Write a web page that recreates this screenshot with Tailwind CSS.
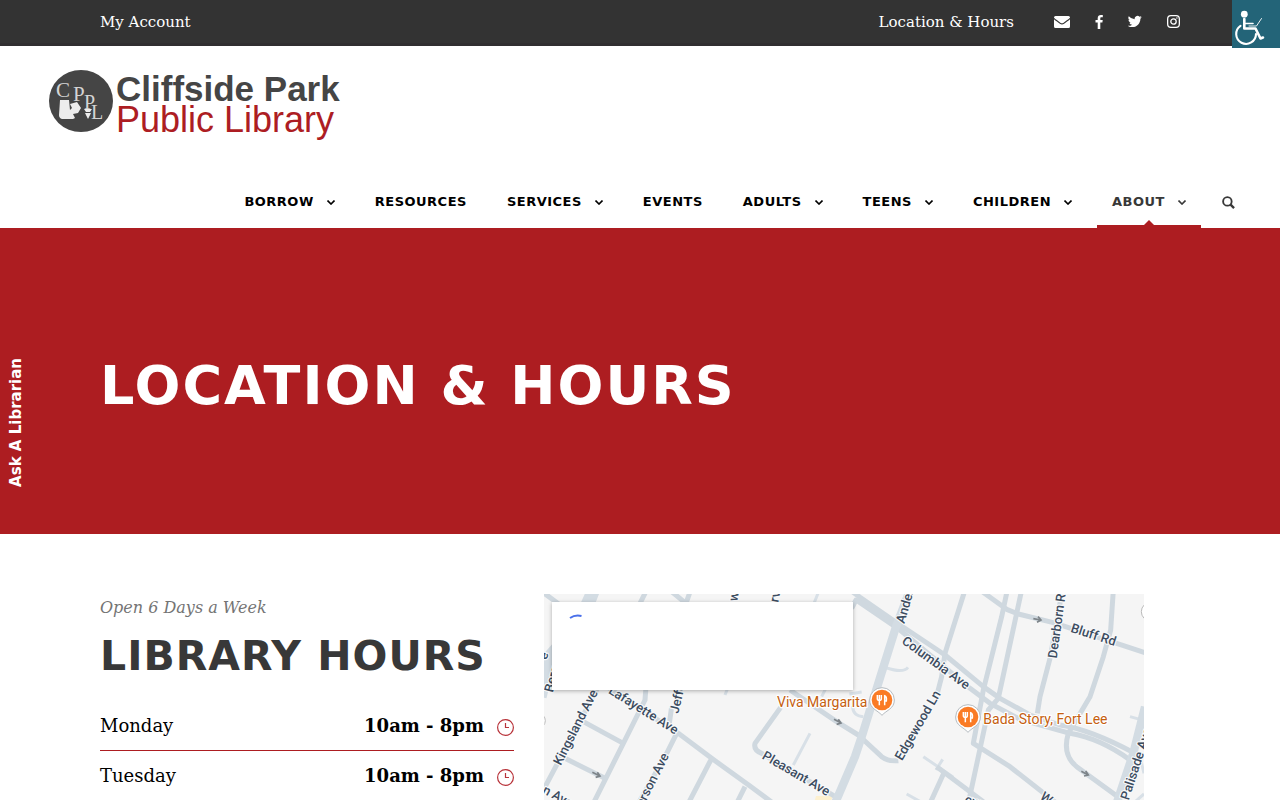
<!DOCTYPE html>
<html lang="en">
<head>
    <meta charset="UTF-8">
    <meta name="viewport" content="width=device-width, initial-scale=1.0">
    <title>Location &amp; Hours - Cliffside Park Public Library</title>
    <script src="https://cdn.jsdelivr.net/npm/@tailwindcss/browser@4"></script>
</head>
<body class="bg-white font-['DejaVu_Serif',serif] text-black">
    <!-- Top bar -->
    <div class="bg-[#333333] h-[46px] border-b-3 border-[#302e30] px-[100px] flex items-center justify-between text-[15px] leading-6 text-white">
        <a href="#">My Account</a>
        <div class="flex items-center gap-10">
            <a href="#">Location &amp; Hours</a>
            <div class="flex items-center gap-[25px]">
                <a href="#" aria-label="Email">
                    <svg class="w-4 h-3" viewBox="0 0 16 12" fill="#fff"><path d="M1.500 0h13A1.500 1.500 0 0 1 16 1.500v.3C14.800 3.200 11 5.600 9.300 6.900c-.9.600-1.700.6-2.600 0C5 5.600 1.200 3.200 0 1.800v-.3A1.500 1.500 0 0 1 1.500 0zM0 3.300c1.500 1.500 4.300 3.300 5.900 4.500 1.400 1 2.800 1 4.200 0 1.600-1.200 4.400-3 5.900-4.500v7.200a1.500 1.500 0 0 1-1.500 1.500h-13A1.500 1.500 0 0 1 0 10.500z"/></svg>
                </a>
                <a href="#" aria-label="Facebook">
                    <svg class="w-2 h-[14px]" viewBox="0 0 8 14" fill="#fff"><path d="M7.800.1v2.200H6.500c-1 0-1.200.5-1.200 1.200v1.500h2.400L7.400 7.500H5.300V14H2.700V7.500H.5V5h2.200V3.200C2.700 1.100 4 0 5.900 0c.9 0 1.700.1 1.900.1z"/></svg>
                </a>
                <a href="#" aria-label="Twitter">
                    <svg class="w-[14px] h-[13px]" viewBox="0 0 24 22" fill="#fff"><path d="M23.600 3.600a10 10 0 0 1-2.400 2.500v.6c0 6.500-4.900 13.900-13.900 13.900-2.800 0-5.400-.8-7.500-2.200 2.600.3 5.200-.5 7.200-2-2.200 0-4-1.500-4.600-3.400.7.1 1.500.1 2.200-.1a4.900 4.900 0 0 1-3.900-4.900c.6.400 1.400.6 2.200.6A4.900 4.900 0 0 1 1.400 2.100a13.900 13.900 0 0 0 10.100 5.100 4.900 4.900 0 0 1 8.300-4.500 9 9 0 0 0 3.100-1.200 4.900 4.900 0 0 1-2.100 2.700 10 10 0 0 0 2.800-.6z"/></svg>
                </a>
                <a href="#" aria-label="Instagram">
                    <svg class="w-[13px] h-[13px]" viewBox="0 0 14 14" fill="none" stroke="#fff"><rect x=".7" y=".7" width="12.600" height="12.600" rx="3.500" stroke-width="1.400"/><circle cx="7" cy="7" r="2.900" stroke-width="1.400"/><circle cx="10.700" cy="3.300" r=".8" fill="#fff" stroke="none"/></svg>
                </a>
            </div>
        </div>
    </div>

    <!-- Accessibility toggle -->
    <button aria-label="Accessibility options" class="absolute top-0 right-0 w-12 h-12 bg-[#236478]">
        <svg class="w-12 h-12" viewBox="0 0 48 48" fill="none" stroke="#fff" stroke-linecap="round" stroke-linejoin="round">
            <circle cx="12.300" cy="14.200" r="3.400" fill="#fff" stroke="none"/>
            <path d="M12.300 19v9.500H23.500L28.500 38.500L31 37.500" stroke-width="2.600"/>
            <path d="M13 23.500h8" stroke-width="1.600"/>
            <path d="M17 26h7.500L29.500 18.500" stroke-width=".9"/>
            <path d="M8.500 25.800A9.900 9.900 0 1 0 24 34" stroke-width="2.100"/>
        </svg>
    </button>

    <header class="pt-6">
        <a href="#" class="flex w-fit ml-[49px] gap-[3px]" aria-label="Cliffside Park Public Library">
            <svg class="w-16 h-[62px]" viewBox="0 0 64 62">
                <ellipse cx="32" cy="31" rx="32" ry="31" fill="#454545"/>
                <g fill="#d4d4d4" font-family="Liberation Serif, serif">
                    <text x="7" y="27" font-size="21">C</text>
                    <text x="24" y="31" font-size="21">P</text>
                    <text x="35" y="39" font-size="20">P</text>
                    <text x="42" y="49" font-size="20">L</text>
                </g>
                <path d="M11 30h9l1 10 2-2-2-4 7-2 4 6-3 5-5 1 2 4-2 1H13q-3-1-3-4z" fill="#ededed"/>
                <path d="M35 39h8l-2 3h-4zM36 43h6l-3 6z" fill="#ededed"/>
            </svg>
            <span class="flex flex-col font-['Liberation_Sans',sans-serif] leading-[31px] pt-[3px]">
                <span class="text-[35px] font-bold text-[#454545]">Cliffside Park</span>
                <span class="text-[36px] text-[#ad1d23]">Public Library</span>
            </span>
        </a>

        <nav class="mt-[41px] h-[52px] pr-[45px] flex justify-end gap-10 text-[13px] leading-[52px] font-bold tracking-[0.5px] font-['DejaVu_Sans',sans-serif]">
            <a href="#" class="flex items-center gap-[13px]">BORROW
                <svg class="w-2 h-[5px]" viewBox="0 0 8 5" fill="none" stroke="currentColor" stroke-width="1.600"><path d="M.5.5L4 4L7.500.5"/></svg>
            </a>
            <a href="#">RESOURCES</a>
            <a href="#" class="flex items-center gap-[13px]">SERVICES
                <svg class="w-2 h-[5px]" viewBox="0 0 8 5" fill="none" stroke="currentColor" stroke-width="1.600"><path d="M.5.5L4 4L7.500.5"/></svg>
            </a>
            <a href="#">EVENTS</a>
            <a href="#" class="flex items-center gap-[13px]">ADULTS
                <svg class="w-2 h-[5px]" viewBox="0 0 8 5" fill="none" stroke="currentColor" stroke-width="1.600"><path d="M.5.5L4 4L7.500.5"/></svg>
            </a>
            <a href="#" class="flex items-center gap-[13px]">TEENS
                <svg class="w-2 h-[5px]" viewBox="0 0 8 5" fill="none" stroke="currentColor" stroke-width="1.600"><path d="M.5.5L4 4L7.500.5"/></svg>
            </a>
            <a href="#" class="flex items-center gap-[13px]">CHILDREN
                <svg class="w-2 h-[5px]" viewBox="0 0 8 5" fill="none" stroke="currentColor" stroke-width="1.600"><path d="M.5.5L4 4L7.500.5"/></svg>
            </a>
            <a href="#" class="relative flex items-center gap-[13px] text-[#383838]">ABOUT
                <svg class="w-2 h-[5px]" viewBox="0 0 8 5" fill="none" stroke="currentColor" stroke-width="1.600"><path d="M.5.5L4 4L7.500.5"/></svg>
                <!-- Current page marker -->
                <span class="absolute bottom-0 -left-[15px] -right-[15px] h-[3px] bg-[#ad1d21]"></span>
                <svg class="absolute bottom-[3px] left-1/2 w-[10px] h-[5px] -translate-x-1/2" viewBox="0 0 10 5"><path d="M0 5L5 0L10 5z" fill="#ad1d21"/></svg>
            </a>
            <button aria-label="Search" class="-ml-1 text-[#383838]">
                <svg class="w-[13px] h-[13px]" viewBox="0 0 14 14" fill="none" stroke="currentColor" stroke-width="2"><circle cx="5.800" cy="5.800" r="4.600"/><path d="M9 9l4 4" stroke-width="2.500"/></svg>
            </button>
        </nav>
    </header>

    <!-- Page title -->
    <section class="bg-[#ad1d21] h-[306px] px-[100px] flex items-center">
        <h1 class="pt-2.5 text-[54px] leading-[64px] font-bold tracking-[2px] text-white font-['DejaVu_Sans',sans-serif]">LOCATION &amp; HOURS</h1>
    </section>

    <button class="fixed left-0 top-[350px] w-8 h-[145px] bg-[#ad1d21] flex items-center justify-center">
        <span class="[writing-mode:vertical-rl] rotate-180 text-[15px] leading-5 font-bold text-white font-['DejaVu_Sans',sans-serif]">Ask A Librarian</span>
    </button>

    <main class="pl-[100px] pr-[136px] pt-[60px] flex gap-[30px] overflow-hidden">
        <section class="flex-1">
            <p class="italic text-base leading-[27px] text-[#747474]">Open 6 Days a Week</p>
            <h2 class="mt-2 text-[41px] leading-[54px] font-bold tracking-[1px] whitespace-nowrap text-[#383838] font-['DejaVu_Sans',sans-serif]">LIBRARY HOURS</h2>
            <ul class="mt-[18px] text-lg leading-[49px]">
                <li class="flex items-center border-b border-b-[#ad1d21]">
                    <span class="flex-1">Monday</span>
                    <span class="font-bold">10am - 8pm</span>
                    <svg class="ml-[13px] mt-1 w-[17px] h-[17px]" viewBox="0 0 17 17" fill="none" stroke="#b8333a"><circle cx="8.500" cy="8.500" r="7.900" stroke-width="1.200"/><path d="M8.500 4v4.500H12" stroke-width="1.200"/></svg>
                </li>
                <li class="flex items-center">
                    <span class="flex-1">Tuesday</span>
                    <span class="font-bold">10am - 8pm</span>
                    <svg class="ml-[13px] mt-1 w-[17px] h-[17px]" viewBox="0 0 17 17" fill="none" stroke="#b8333a"><circle cx="8.500" cy="8.500" r="7.900" stroke-width="1.200"/><path d="M8.500 4v4.500H12" stroke-width="1.200"/></svg>
                </li>
            </ul>
        </section>

        <!-- Map -->
        <div class="relative w-[600px] h-[206px]">
            <svg class="w-full h-full bg-[#f5f5f5]" viewBox="12 12 1800 618" preserveAspectRatio="xMinYMin slice" fill="none">
                <path d="M828 618h50l-6 20h-50z" fill="#fdf0cf"/>
                <!-- Side streets -->
                <g stroke="#d8e0e7" stroke-width="9" stroke-linejoin="round">
                    <path d="M565 290L555 315M838 0L820 45M1040 234Q1090 250 1104 232M810 430L760 525M845 320L860 290M928 312L965 306M938 348Q938 378 970 380M1150 500L1240 562M1208 508L1188 540M1100 612L1150 640M1770 380L1800 388M1780 640L1812 612M1800 500L1812 550"/>
                </g>
                <!-- Streets -->
                <g stroke="#cfd8df" stroke-width="15" stroke-linejoin="round">
                    <path d="M0 0L60 45M320 0L300 40M395 5L438 40L452 0M175 290L10 600"/>
                    <path d="M318 290L315 330L250 460L160 640M130 395L250 460M75 505L195 565"/>
                    <path d="M200 290L415 430L515 505L630 588L700 640M395 350L388 400M410 430L380 490L295 640M515 505L445 640M615 590L590 640"/>
                    <path d="M750 300L890 395L955 435L1025 500Q1045 515 1075 512M1192 310L1205 260L1215 190L1275 0"/>
                    <path d="M722 352L645 460Q640 480 665 490L890 622"/>
                    <path d="M930 0L960 22L1080 105L1215 195L1330 290L1380 325L1470 375L1560 405Q1650 418 1785 490"/>
                    <path d="M935 55L948 30L1080 120L1290 295L1350 340L1440 388L1590 430Q1680 445 1770 510"/>
                    <path d="M1320 0L1400 58L1435 72L1540 98L1730 160L1820 190"/>
                    <path d="M1402 0L1385 80L1330 300L1300 460L1410 530L1550 640M1445 0L1375 325L1345 360L1285 640"/>
                    <path d="M1565 12L1530 205L1500 320L1492 370M1720 0L1712 120L1690 200L1650 320L1585 430C1570 480 1585 510 1610 530L1740 625"/>
                    <path d="M1190 530L1330 635M1212 548L1170 640"/>
                </g>
                <!-- Main roads -->
                <g stroke="#d3dce3" stroke-width="25" stroke-linejoin="round">
                    <path d="M160 0Q130 90 30 200L0 320" stroke-width="40"/>
                    <path d="M1110 0L1068 110L1018 270L965 440L945 500L885 640M1815 350L1780 490L1730 640"/>
                </g>
                <g stroke="#7d8489" stroke-width="5">
                    <path d="M157 547L178 557M172 547L180 558L167 562M882 388L902 398M895 388L903 399L890 403M1480 86L1502 90M1494 80L1503 90L1491 97M1624 544L1643 554M1637 543L1645 555L1632 558"/>
                </g>
                <g fill="#fff" stroke="#bbb" stroke-width="3"><circle cx="1832" cy="65" r="28"/><circle cx="-6" cy="392" r="22"/></g>
                <!-- Street names -->
                <g fill="#3c4c60" stroke="#f8f9fa" stroke-width="7" stroke-linejoin="round" paint-order="stroke" font-family="Roboto, sans-serif" font-size="39" font-weight="500">
                    <text transform="translate(62 528) rotate(-63)">Kingsland Ave</text>
                    <text transform="translate(203 308) rotate(32)">Lafayette Ave</text>
                    <text transform="translate(415 372) rotate(-77)">Jefferson</text>
                    <text transform="translate(309 652) rotate(-63)">erson Ave</text>
                    <text transform="translate(38 309) rotate(-75)">Bergen</text>
                    <text transform="translate(20 211) rotate(-75)">e</text>
                    <text transform="translate(5 608) rotate(28)">n Ave</text>
                    <text transform="translate(592 35) rotate(-80)">w</text>
                    <text transform="translate(715 38) rotate(-80)">rv</text>
                    <text transform="translate(664 505) rotate(30)">Pleasant Ave</text>
                    <text transform="translate(1093 102) rotate(-74)">Anderson</text>
                    <text transform="translate(1083 158) rotate(36)">Columbia Ave</text>
                    <text transform="translate(1086 514) rotate(-60)">Edgewood Ln</text>
                    <text transform="translate(1550 206) rotate(-82)">Dearborn Rd</text>
                    <text transform="translate(1590 125) rotate(18)">Bluff Rd</text>
                    <text transform="translate(1766 632) rotate(-72)">Palisade Ave</text>
                    <text transform="translate(1498 625) rotate(36)">West</text>
                    <text transform="translate(1272 640) rotate(15)">ew</text>
                </g>
                <!-- Restaurants -->
                <g fill="#c5600f" stroke="#fff" stroke-width="7" stroke-linejoin="round" paint-order="stroke" font-family="Roboto, sans-serif" font-size="42">
                    <text x="711" y="350">Viva Margarita</text>
                    <text x="1330" y="401">Bada Story, Fort Lee</text>
                </g>
                <g id="pin">
                    <path d="M1026 376C1012 360 989 356 989 330a37 37 0 0 1 74 0C1063 356 1040 360 1026 376z" fill="#fff" stroke="#b5bbc0" stroke-width="3"/>
                    <circle cx="1026" cy="330" r="31" fill="#fa7b25"/>
                    <path d="M1012 315v11q0 5 6 5t6-5v-11M1018 315v31M1034 346v-29q7 2 5 16h-4" stroke="#fff" stroke-width="4.500"/>
                </g>
                <use href="#pin" x="258" y="51"/>
            </svg>
            <div class="absolute top-2 left-2 w-[301px] h-[88px] bg-white shadow-[0_1px_4px_rgba(0,0,0,0.3)]">
                <svg class="ml-[17px] mt-3 w-[14px] h-[5px]" viewBox="0 0 14 5" fill="none"><path d="M1 4Q6 .5 12.500 2" stroke="#4a70ea" stroke-width="2"/></svg>
            </div>
        </div>
    </main>
</body>
</html>
